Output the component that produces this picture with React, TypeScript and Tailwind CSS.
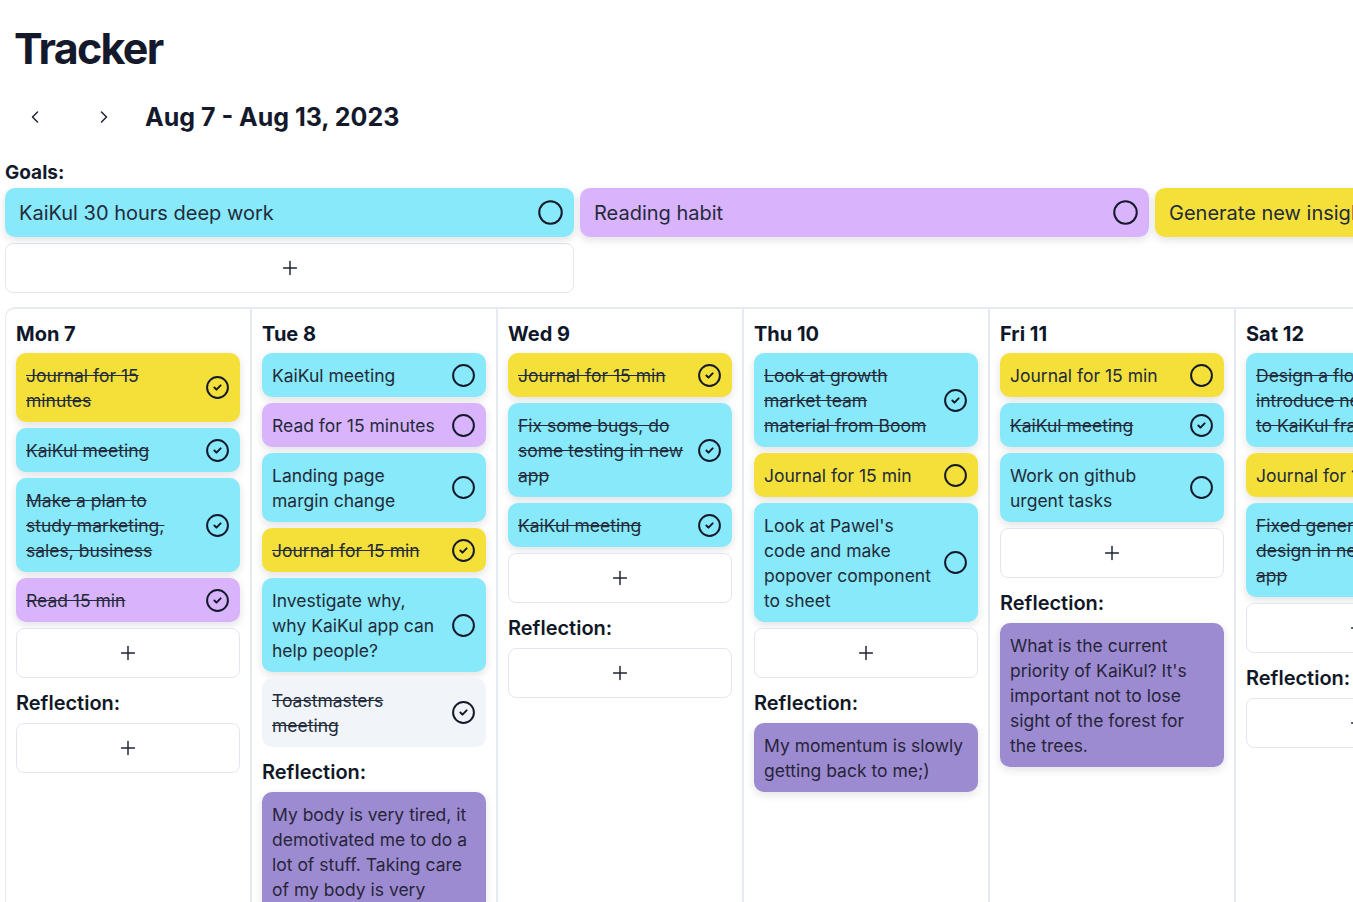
import React from "react";
import { Circle, CircleCheck, ChevronLeft, ChevronRight, Plus } from "lucide-react";

type Color = "cyan" | "yellow" | "purple" | "gray";
type Task = { text: string; color: Color; done: boolean };
type Day = { name: string; tasks: Task[]; add: boolean; reflection?: string };

const bg: Record<Color, string> = {
  cyan: "bg-[#87e9f9]",
  yellow: "bg-[#f5e03a]",
  purple: "bg-[#d9b4fd]",
  gray: "bg-[#f1f5f9]",
};

const days: Day[] = [
  {
    name: "Mon 7",
    add: true,
    tasks: [
      { text: "Journal for 15 minutes", color: "yellow", done: true },
      { text: "KaiKul meeting", color: "cyan", done: true },
      { text: "Make a plan to study marketing, sales, business", color: "cyan", done: true },
      { text: "Read 15 min", color: "purple", done: true },
    ],
  },
  {
    name: "Tue 8",
    add: false,
    tasks: [
      { text: "KaiKul meeting", color: "cyan", done: false },
      { text: "Read for 15 minutes", color: "purple", done: false },
      { text: "Landing page margin change", color: "cyan", done: false },
      { text: "Journal for 15 min", color: "yellow", done: true },
      { text: "Investigate why, why KaiKul app can help people?", color: "cyan", done: false },
      { text: "Toastmasters meeting", color: "gray", done: true },
    ],
    reflection:
      "My body is very tired, it demotivated me to do a lot of stuff. Taking care of my body is very important for me to keep going.",
  },
  {
    name: "Wed 9",
    add: true,
    tasks: [
      { text: "Journal for 15 min", color: "yellow", done: true },
      { text: "Fix some bugs, do some testing in new app", color: "cyan", done: true },
      { text: "KaiKul meeting", color: "cyan", done: true },
    ],
  },
  {
    name: "Thu 10",
    add: true,
    tasks: [
      { text: "Look at growth market team material from Boom", color: "cyan", done: true },
      { text: "Journal for 15 min", color: "yellow", done: false },
      { text: "Look at Pawel's code and make popover component to sheet", color: "cyan", done: false },
    ],
    reflection: "My momentum is slowly getting back to me;)",
  },
  {
    name: "Fri 11",
    add: true,
    tasks: [
      { text: "Journal for 15 min", color: "yellow", done: false },
      { text: "KaiKul meeting", color: "cyan", done: true },
      { text: "Work on github urgent tasks", color: "cyan", done: false },
    ],
    reflection:
      "What is the current priority of KaiKul? It's important not to lose sight of the forest for the trees.",
  },
  {
    name: "Sat 12",
    add: true,
    tasks: [
      { text: "Design a flow to\nintroduce new flows\nto KaiKul framework", color: "cyan", done: true },
      { text: "Journal for 15 min", color: "yellow", done: false },
      { text: "Fixed generator\ndesign in new\napp", color: "cyan", done: true },
    ],
  },
  {
    name: "Sun 13",
    add: true,
    tasks: [{ text: "Journal for 15 min", color: "yellow", done: false }],
  },
];

function StatusIcon({ done, size = 25 }: { done: boolean; size?: number }) {
  return done ? (
    <CircleCheck size={size} strokeWidth={1.9} className="shrink-0 text-[#141a2b]" />
  ) : (
    <Circle size={size} strokeWidth={1.9} className="shrink-0 text-[#141a2b]" />
  );
}

function TaskCard({ t }: { t: Task }) {
  return (
    <div
      className={`flex items-center justify-between gap-[8px] rounded-[10px] py-[9.5px] pl-[10px] pr-[10px] ${bg[t.color]} ${
        t.color === "gray" ? "" : "shadow-[0_3px_8px_rgba(15,23,42,0.13)]"
      }`}
    >
      <span
        className={`whitespace-pre-line text-[17.5px] leading-[25px] text-[#232b3b] ${
          t.done ? "line-through decoration-[#232b3b]" : ""
        }`}
      >
        {t.text}
      </span>
      <StatusIcon done={t.done} />
    </div>
  );
}

function AddButton({ className = "" }: { className?: string }) {
  return (
    <div
      className={`flex h-[50px] items-center justify-center rounded-[8px] border border-[#e2e6ef] bg-white ${className}`}
    >
      <Plus size={22} strokeWidth={1.6} className="text-[#1e2433]" />
    </div>
  );
}

function DayColumn({ d }: { d: Day }) {
  return (
    <div className="flex w-[246px] shrink-0 flex-col border-r-2 border-[#e6e9f2] px-[10px] pt-[13px]">
      <div className="mb-[7px] text-[20px] font-bold leading-[24px] text-[#0f172a]">{d.name}</div>
      <div className="flex flex-col gap-[6px]">
        {d.tasks.map((t, i) => (
          <TaskCard key={i} t={t} />
        ))}
        {d.add && <AddButton />}
      </div>
      <div className="mt-[13px] mb-[8px] text-[20px] font-semibold leading-[24px] text-[#111827]">
        Reflection:
      </div>
      {d.reflection ? (
        <div className="rounded-[10px] bg-[#9d8bd1] px-[10px] py-[9.5px] text-[17.5px] leading-[25px] text-[#27253a] shadow-[0_3px_8px_rgba(15,23,42,0.12)]">
          {d.reflection}
        </div>
      ) : (
        <AddButton />
      )}
    </div>
  );
}

const goals: { text: string; color: string }[] = [
  { text: "KaiKul 30 hours deep work", color: "bg-[#87e9f9]" },
  { text: "Reading habit", color: "bg-[#d9b4fd]" },
  { text: "Generate new insights for KaiKul", color: "bg-[#f5e03a]" },
];

export default function App() {
  return (
    <div className="h-screen w-screen overflow-hidden bg-white font-['Inter','Noto_Sans',sans-serif] text-[#0f172a]">
      <div className="pl-[5px]">
        <h1 className="pl-[9px] pt-[22px] text-[43px] font-bold leading-[52px] tracking-[-0.04em] text-[#141a2b]">
          Tracker
        </h1>
        <div className="mt-[23px] flex h-[40px] items-center">
          <button className="ml-[10px] flex h-10 w-10 items-center justify-center">
            <ChevronLeft size={20} strokeWidth={1.8} className="text-[#1e2433]" />
          </button>
          <button className="ml-[29px] flex h-10 w-10 items-center justify-center">
            <ChevronRight size={20} strokeWidth={1.8} className="text-[#1e2433]" />
          </button>
          <div className="ml-[21px] text-[25px] font-bold leading-[32px] text-[#141a2b]">
            Aug 7 - Aug 13, 2023
          </div>
        </div>
        <div className="mt-[24px] text-[19px] font-bold leading-[24px] text-[#141a2b]">Goals:</div>
        <div className="mt-[3px] flex gap-[6px]">
          {goals.map((g, i) => (
            <div
              key={i}
              className={`flex h-[49px] w-[569px] shrink-0 items-center justify-between rounded-[10px] pl-[14px] pr-[10px] shadow-[0_3px_8px_rgba(15,23,42,0.13)] ${g.color}`}
            >
              <span className="text-[20px] leading-[28px] text-[#232b3b]">{g.text}</span>
              <Circle size={27} strokeWidth={1.8} className="shrink-0 text-[#141a2b]" />
            </div>
          ))}
        </div>
        <AddButton className="mt-[6px] h-[49px] w-[569px]" />
        <div className="mt-[14px] flex min-h-[700px] rounded-tl-[10px] border-l border-t-2 border-[#e6e9f2]">
          {days.map((d, i) => (
            <DayColumn key={i} d={d} />
          ))}
        </div>
      </div>
    </div>
  );
}
